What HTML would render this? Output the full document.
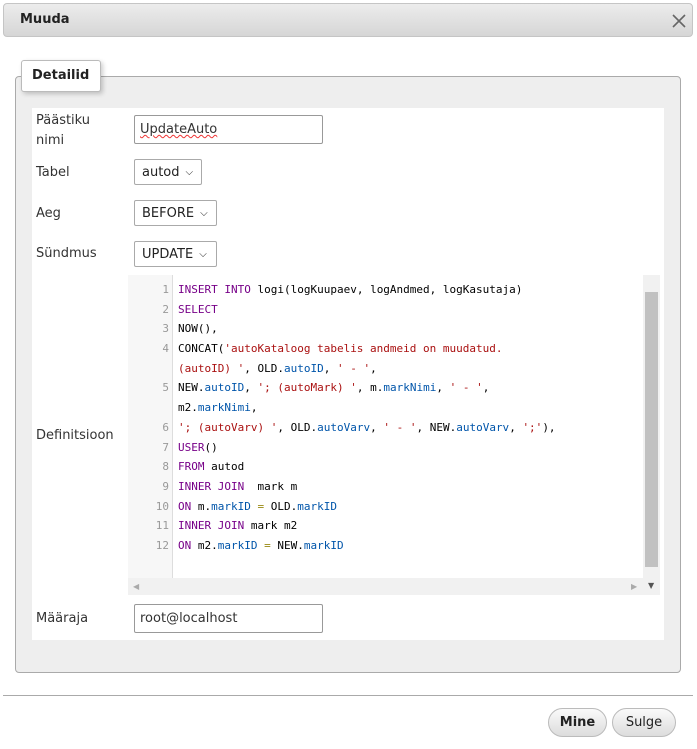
<!DOCTYPE html>
<html><head><meta charset="utf-8"><style>
*{box-sizing:border-box;margin:0;padding:0}
body{width:697px;height:749px;background:#fff;font-family:"DejaVu Sans",Verdana,sans-serif;font-size:13px;color:#333;position:relative;overflow:hidden}
.abs{position:absolute}
.hdr{left:3px;top:3px;width:690px;height:34px;border:1px solid #c5c5c5;border-radius:4px;background:linear-gradient(#ececec,#d6d6d6)}
.hdr b{position:absolute;left:16px;top:8px;font-size:13px;color:#222}
.fs{left:15px;top:76px;width:666px;height:597px;border:1px solid #aaa;border-radius:4px;background:#eee}
.leg{left:21px;top:60px;width:80px;height:32px;border:1px solid #bbb;border-radius:3px;background:#fff;box-shadow:2px 2px 5px rgba(0,0,0,.2);font-weight:bold;font-size:13px;color:#222;padding:7px 0 0 10px}
.white{left:32px;top:108px;width:632px;height:532px;background:#fff}
.lbl{left:36px;font-size:13px;line-height:20px;color:#333}
.inp{border:1px solid #999;border-radius:2px;background:#fff;font-size:13px;color:#333;padding:6px 5px 0}
.sel{border:1px solid #aaa;border-radius:2px;background:#fff;font-size:13px;color:#222;padding:5px 7px 0;height:26px}
.sel i{font-style:normal;font-size:10px;margin-left:6px;position:relative;top:-1px}
.ed{left:128px;top:275px;width:532px;height:320px;background:#fff}
.gut{left:128px;top:275px;width:45px;height:303px;background:#f7f7f7;border-right:1px solid #ddd}
.code{left:128px;top:280px;font-family:"DejaVu Sans Mono","Liberation Mono",monospace;font-size:11px;line-height:19.7px;color:#000}
.code div{height:19.7px;white-space:pre}
.n{display:inline-block;width:41px;text-align:right;color:#999;margin-right:9px}
.k{color:#708}.s{color:#a11}.p{color:#05a}.o{color:#981}
.btn{top:708px;height:29px;border:1px solid #bbb;border-radius:15px;background:linear-gradient(#fafafa,#dcdcdc);font-size:13px;color:#222;text-align:center;line-height:27px}
</style></head><body>
<div class="abs hdr"><b>Muuda</b>
<svg class="abs" style="left:667px;top:9px" width="16" height="16"><path d="M2 2L14 14M14 2L2 14" stroke="#666" stroke-width="1.6"/></svg></div>
<div class="abs fs"></div>
<div class="abs white"></div>
<div class="abs leg">Detailid</div>
<div class="abs lbl" style="top:111px">Päästiku<br>nimi</div>
<div class="abs inp" style="left:134px;top:115px;width:189px;height:29px"><span style="text-decoration:underline wavy #e33;text-decoration-thickness:1px">UpdateAuto</span></div>
<div class="abs lbl" style="top:163px">Tabel</div>
<div class="abs sel" style="left:134px;top:159px;width:68px">autod<i>&#x2335;</i></div>
<div class="abs lbl" style="top:204px">Aeg</div>
<div class="abs sel" style="left:134px;top:200px;width:83px">BEFORE<i>&#x2335;</i></div>
<div class="abs lbl" style="top:244px">Sündmus</div>
<div class="abs sel" style="left:134px;top:241px;width:83px">UPDATE<i>&#x2335;</i></div>
<div class="abs lbl" style="top:426px">Definitsioon</div>
<div class="abs ed"></div>
<div class="abs gut"></div>
<div class="abs" style="left:643px;top:275px;width:17px;height:303px;background:#f1f1f1"></div>
<div class="abs" style="left:645px;top:292px;width:13px;height:275px;background:#c1c1c1"></div>
<div class="abs" style="left:128px;top:578px;width:532px;height:17px;background:#f1f1f1"></div>
<div class="abs" style="left:133px;top:582px;font-size:8px;color:#aaa">&#9664;</div>
<div class="abs" style="left:631px;top:582px;font-size:8px;color:#aaa">&#9654;</div>
<div class="abs" style="left:648px;top:581px;font-size:8px;color:#555">&#9660;</div>
<div class="abs code"><div><span class="n">1</span><span class="k">INSERT INTO</span> logi(logKuupaev, logAndmed, logKasutaja)</div><div><span class="n">2</span><span class="k">SELECT</span></div><div><span class="n">3</span>NOW(),</div><div><span class="n">4</span>CONCAT(<span class="s">'autoKataloog tabelis andmeid on muudatud.</span></div><div><span class="n"></span><span class="s">(autoID) '</span>, OLD.<span class="p">autoID</span>, <span class="s">' - '</span>,</div><div><span class="n">5</span>NEW.<span class="p">autoID</span>, <span class="s">'; (autoMark) '</span>, m.<span class="p">markNimi</span>, <span class="s">' - '</span>,</div><div><span class="n"></span>m2.<span class="p">markNimi</span>,</div><div><span class="n">6</span><span class="s">'; (autoVarv) '</span>, OLD.<span class="p">autoVarv</span>, <span class="s">' - '</span>, NEW.<span class="p">autoVarv</span>, <span class="s">';'</span>),</div><div><span class="n">7</span><span class="k">USER</span>()</div><div><span class="n">8</span><span class="k">FROM</span> autod</div><div><span class="n">9</span><span class="k">INNER JOIN</span>  mark m</div><div><span class="n">10</span><span class="k">ON</span> m.<span class="p">markID</span> <span class="o">=</span> OLD.<span class="p">markID</span></div><div><span class="n">11</span><span class="k">INNER JOIN</span> mark m2</div><div><span class="n">12</span><span class="k">ON</span> m2.<span class="p">markID</span> <span class="o">=</span> NEW.<span class="p">markID</span></div></div>
<div class="abs lbl" style="top:609px">Määraja</div>
<div class="abs inp" style="left:134px;top:604px;width:189px;height:29px">root@localhost</div>
<div class="abs" style="left:3px;top:695px;width:690px;height:1px;background:#aaa"></div>
<div class="abs btn" style="left:548px;width:59px;font-weight:bold">Mine</div>
<div class="abs btn" style="left:612px;width:64px">Sulge</div>
</body></html>
